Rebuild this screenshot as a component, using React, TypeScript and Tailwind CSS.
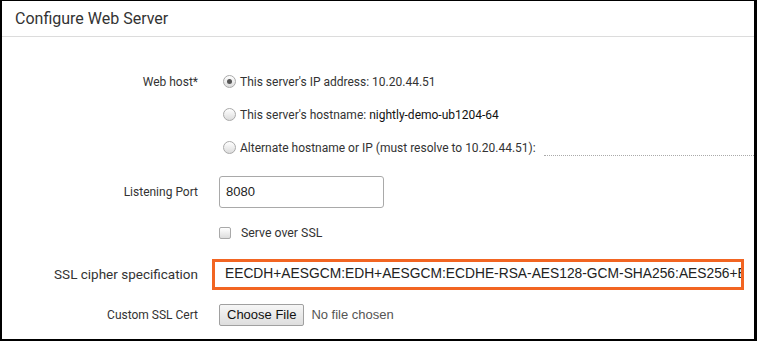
import React from "react";

const roboto = { fontFamily: "Roboto, 'Liberation Sans', sans-serif" };
const arial = { fontFamily: "'Liberation Sans', Arial, sans-serif" };

function Radio({ checked }: { checked?: boolean }) {
  return (
    <span className="relative inline-flex h-[13px] w-[13px] shrink-0 items-center justify-center rounded-full border border-[#a9a9a9] bg-gradient-to-b from-[#ffffff] to-[#dcdcdc]">
      {checked && <span className="h-[5px] w-[5px] rounded-full bg-[#555]" />}
    </span>
  );
}

function Label({ children, big }: { children: React.ReactNode; big?: boolean }) {
  return (
    <div
      className={
        big
          ? "w-[196px] shrink-0 text-right text-[13.5px] text-[#333]"
          : "w-[196px] shrink-0 text-right text-[12px] text-[#333]"
      }
      style={roboto}
    >
      {children}
    </div>
  );
}

export default function App() {
  return (
    <div className="h-[341px] w-[757px] overflow-hidden border-t-[1px] border-l-2 border-r-[3px] border-b-2 border-black bg-white">
      <div className="flex h-[36px] items-center border-b border-[#dcdcdc] pl-[13px]">
        <span className="text-[16px] text-[#333]" style={roboto}>
          Configure Web Server
        </span>
      </div>
      <div className="pt-[28px]">
        {/* Web host */}
        <div className="flex h-[33px] items-center">
          <Label>Web host*</Label>
          <div className="ml-[25px] flex items-center gap-[4px] text-[12px] text-[#333]" style={roboto}>
            <Radio checked />
            <span>This server's IP address: 10.20.44.51</span>
          </div>
        </div>
        <div className="flex h-[33px] items-center">
          <div className="w-[196px] shrink-0" />
          <div className="ml-[25px] flex items-center gap-[4px] text-[12px] text-[#333]" style={roboto}>
            <Radio />
            <span>
              This server's hostname: <span className="text-[#111]">nightly-demo-ub1204-64</span>
            </span>
          </div>
        </div>
        <div className="flex h-[33px] items-center">
          <div className="w-[196px] shrink-0" />
          <div className="ml-[25px] flex flex-1 items-center gap-[4px] text-[12px] text-[#333]" style={roboto}>
            <Radio />
            <span className="whitespace-nowrap">Alternate hostname or IP (must resolve to 10.20.44.51):</span>
            <div className="ml-[4px] mt-[16px] h-0 flex-1 border-b border-dotted border-[#aaa]" />
          </div>
        </div>

        {/* Listening Port */}
        <div className="mt-[12px] flex h-[32px] items-center">
          <Label>Listening Port</Label>
          <div className="ml-[21px] flex h-[32px] w-[165px] items-center rounded-[3px] border border-[#a9a9a9] pl-[6px] text-[13px] text-[#222]" style={arial}>
            8080
          </div>
        </div>

        {/* Serve over SSL */}
        <div className="mt-[13px] flex h-[24px] items-center">
          <div className="w-[196px] shrink-0" />
          <div className="ml-[21px] flex items-center gap-[10px] text-[12.3px] text-[#333]" style={roboto}>
            <span className="h-[12px] w-[12px] rounded-[2px] border border-[#a9a9a9] bg-gradient-to-b from-[#ffffff] to-[#dcdcdc]" />
            <span>Serve over SSL</span>
          </div>
        </div>

        {/* SSL cipher */}
        <div className="mt-[14px] flex h-[31px] items-center">
          <Label big>SSL cipher specification</Label>
          <div className="ml-[14px] flex h-[31px] w-[532px] items-center overflow-hidden whitespace-nowrap border-[3px] border-[#f26522] pl-[10px] text-[13.8px] text-[#222]" style={arial}>
            EECDH+AESGCM:EDH+AESGCM:ECDHE-RSA-AES128-GCM-SHA256:AES256+EECDH
          </div>
        </div>

        {/* Custom SSL Cert */}
        <div className="mt-[14px] flex h-[22px] items-center">
          <Label>Custom SSL Cert</Label>
          <div className="ml-[21px] flex items-center gap-[7px] text-[13px]" style={arial}>
            <span className="flex h-[22px] items-center rounded-[2px] border border-[#a0a0a0] bg-gradient-to-b from-[#f6f6f6] to-[#dedede] px-[7px] text-[#111]">
              Choose File
            </span>
            <span className="text-[#555]">No file chosen</span>
          </div>
        </div>
      </div>
    </div>
  );
}
